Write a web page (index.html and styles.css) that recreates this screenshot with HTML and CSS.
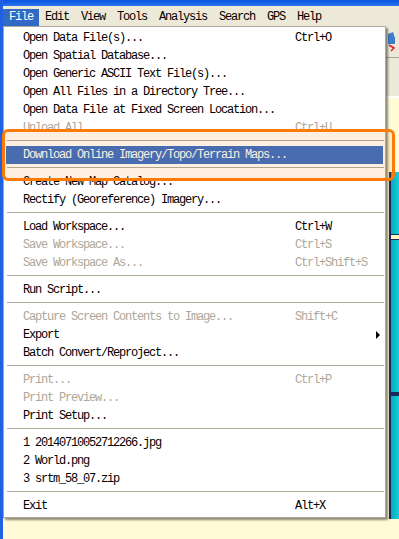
FILE: index.html
```html
<!DOCTYPE html>
<html lang="en">
<head>
    <meta charset="UTF-8">
    <title>File menu</title>
    <link rel="stylesheet" href="styles.css">
</head>
<body>

    <div class="window">
        <div class="titlebar"></div>

        <div class="menubar">
            <span class="top-item active">File</span>
            <span class="top-item">Edit</span>
            <span class="top-item">View</span>
            <span class="top-item">Tools</span>
            <span class="top-item">Analysis</span>
            <span class="top-item">Search</span>
            <span class="top-item">GPS</span>
            <span class="top-item">Help</span>
        </div>

        <div class="workspace">
            <div class="toolbar">
                <svg class="tool-icon" width="8" height="20" viewBox="0 0 8 20">
                    <path d="M0 2 L5 0 L7 6 L7 12 L0 12 Z" fill="#3f7fc8"/>
                    <path d="M1 13 L6 16 L3 19" fill="none" stroke="#e02020" stroke-width="1.5"/>
                </svg>
            </div>
            <div class="toolbar second"></div>
            <div class="canvas">
                <div class="panel">
                    <div class="panel-bar"></div>
                    <div class="panel-bar low"></div>
                </div>
            </div>
        </div>

        <div class="dropdown">
            <div class="item"><span>Open Data File(s)...</span><span>Ctrl+O</span></div>
            <div class="item"><span>Open Spatial Database...</span></div>
            <div class="item"><span>Open Generic ASCII Text File(s)...</span></div>
            <div class="item"><span>Open All Files in a Directory Tree...</span></div>
            <div class="item"><span>Open Data File at Fixed Screen Location...</span></div>
            <div class="item disabled"><span>Unload All</span><span>Ctrl+U</span></div>
            <div class="sep"></div>
            <div class="item selected"><span>Download Online Imagery/Topo/Terrain Maps...</span></div>
            <div class="sep"></div>
            <div class="item"><span>Create New Map Catalog...</span></div>
            <div class="item"><span>Rectify (Georeference) Imagery...</span></div>
            <div class="sep"></div>
            <div class="item"><span>Load Workspace...</span><span>Ctrl+W</span></div>
            <div class="item disabled"><span>Save Workspace...</span><span>Ctrl+S</span></div>
            <div class="item disabled"><span>Save Workspace As...</span><span>Ctrl+Shift+S</span></div>
            <div class="sep"></div>
            <div class="item"><span>Run Script...</span></div>
            <div class="sep"></div>
            <div class="item disabled"><span>Capture Screen Contents to Image...</span><span>Shift+C</span></div>
            <div class="item"><span>Export</span><span class="arrow"></span></div>
            <div class="item"><span>Batch Convert/Reproject...</span></div>
            <div class="sep"></div>
            <div class="item disabled"><span>Print...</span><span>Ctrl+P</span></div>
            <div class="item disabled"><span>Print Preview...</span></div>
            <div class="item"><span>Print Setup...</span></div>
            <div class="sep"></div>
            <div class="item"><span>1 20140710052712266.jpg</span></div>
            <div class="item"><span>2 World.png</span></div>
            <div class="item"><span>3 srtm_58_07.zip</span></div>
            <div class="sep"></div>
            <div class="item"><span>Exit</span><span>Alt+X</span></div>
        </div>

        <div class="callout"></div>
    </div>

</body>
</html>
```

FILE: styles.css
```css
body {
    margin: 0;
    padding: 0;
    width: 399px;
    height: 539px;
    overflow: hidden;
    font-family: "Liberation Mono", "DejaVu Sans Mono", monospace;
    font-size: 12px;
    letter-spacing: -1.2px;
    color: #000;
    background-color: #fffbd2;
}

.window {
    position: relative;
    height: 539px;
    border-left: 3px solid #2160e2;
    display: flex;
    flex-direction: column;
}

.titlebar {
    height: 6px;
    background: linear-gradient(#0a55e0, #2a72f0);
}

.menubar {
    height: 20px;
    background-color: #ece9d8;
    display: flex;
    align-items: flex-end;
    box-sizing: border-box;
}

.top-item {
    height: 17px;
    line-height: 17px;
    padding: 0 6px;
}

.top-item.active {
    background-color: #316ac5;
    color: #fff;
}

.workspace {
    flex: 1;
    display: flex;
    flex-direction: column;
}

.toolbar {
    height: 31px;
    background-color: #ece9d8;
    border-bottom: 1px solid #aca899;
    display: flex;
    justify-content: flex-end;
    align-items: center;
    padding-right: 3px;
}

.toolbar.second {
    height: 38px;
    border-bottom: 2px solid #fff;
    box-shadow: 0 1px 0 #aca899;
}

.canvas {
    flex: 1;
    background-color: #fffbd6;
    display: flex;
    justify-content: flex-end;
    padding-top: 74px;
    padding-bottom: 20px;
}

.panel {
    width: 8px;
    background: linear-gradient(90deg, #0aa8b8, #12d0e0);
    border-left: 2px solid #1b2a5a;
    display: flex;
    flex-direction: column;
    padding-top: 62px;
    gap: 90px;
}

.panel-bar {
    height: 4px;
    background-color: #fff6c0;
    border-top: 1px solid #1b2a5a;
    border-bottom: 1px solid #1b2a5a;
}

.panel-bar.low {
    margin-top: 62px;
    background-color: #1b2a5a;
    height: 2px;
}

.dropdown {
    position: absolute;
    left: 0;
    top: 26px;
    width: 377px;
    padding: 2px;
    border: 1px solid #aca899;
    background-color: #fff;
    box-shadow: 2px 2px 2px rgba(0, 0, 0, 0.45);
}

.item {
    display: grid;
    grid-template-columns: 272px 1fr;
    height: 18px;
    line-height: 18px;
    padding-left: 17px;
    white-space: nowrap;
}

.item.disabled {
    color: #aca899;
}

.item.selected {
    background-color: #316ac5;
    color: #fff;
}

.arrow {
    justify-self: end;
    align-self: center;
    margin-right: 3px;
    width: 0;
    height: 0;
    border-top: 4px solid transparent;
    border-bottom: 4px solid transparent;
    border-left: 4px solid #000;
}

.sep {
    height: 1px;
    margin: 3px -1px 5px 1px;
    background-color: #aca899;
}

.callout {
    position: absolute;
    left: -1px;
    top: 129px;
    width: 387px;
    height: 46px;
    border: 3px solid #fc7a08;
    border-radius: 6px;
    background-color: rgba(250, 125, 25, 0.12);
}
```
